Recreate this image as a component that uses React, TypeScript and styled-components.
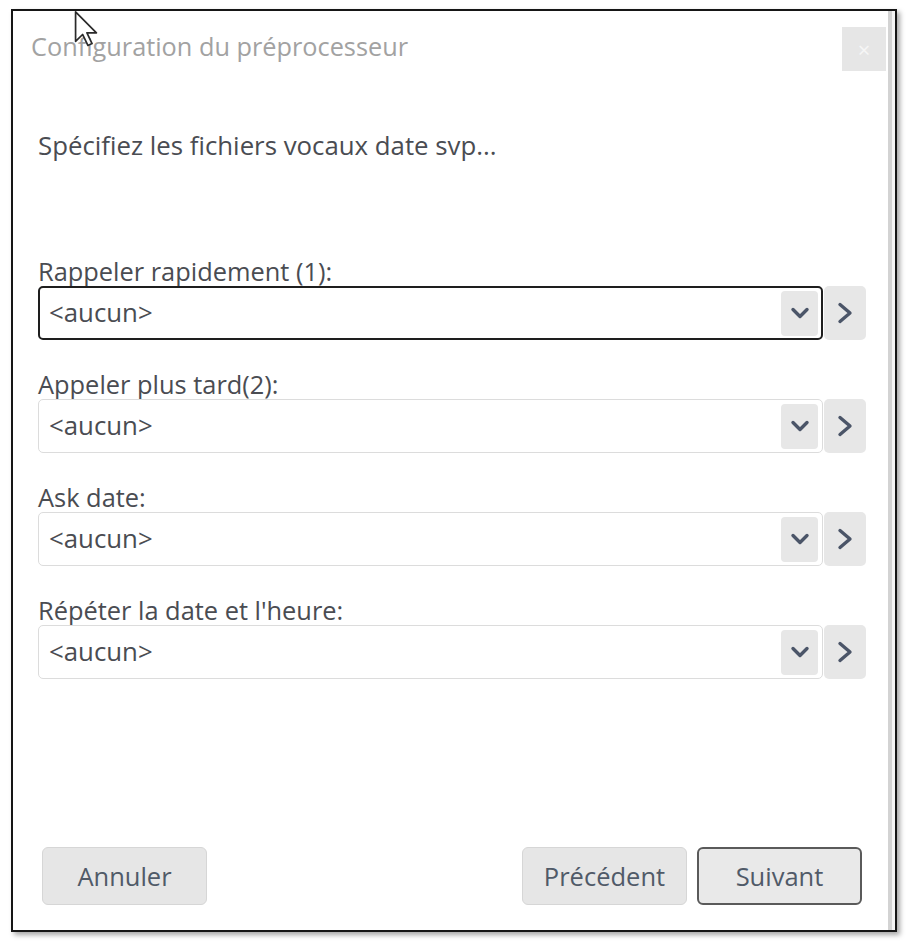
import React from "react";
import styled, { createGlobalStyle } from "styled-components";

const Global = createGlobalStyle`
  html, body { margin: 0; padding: 0; background: #ffffff; }
  body { font-family: "Open Sans", "Noto Sans", sans-serif; }
  * { box-sizing: border-box; }
`;

const Page = styled.div`
  width: 907px;
  height: 946px;
  padding: 9px 0 0 11px;
  position: relative;
`;

const Dialog = styled.div`
  width: 886px;
  height: 923px;
  border: 2px solid #161616;
  background: #ffffff;
  box-shadow: inset -3px 0 0 #f4f4f4, inset -7px 0 0 #d3d3d3, 3px 3px 5px rgba(0, 0, 0, 0.35);
  display: flex;
  flex-direction: column;
  font-family: "Open Sans", "Noto Sans", sans-serif;
`;

const Header = styled.div`
  display: flex;
  align-items: center;
  justify-content: space-between;
  padding: 16px 9px 0 18px;
`;

const Title = styled.div`
  font-size: 25.3px;
  color: #a2a2a2;
  line-height: 34px;
  margin-top: -6px;
`;

const CloseButton = styled.div`
  width: 44px;
  height: 44px;
  background: #e6e6e6;
  color: #f6f6f6;
  font-size: 22px;
  display: flex;
  align-items: center;
  justify-content: center;
`;

const Body = styled.div`
  padding: 57px 29px 0 25px;
  display: flex;
  flex-direction: column;
`;

const Intro = styled.div`
  font-size: 25.8px;
  color: #4a4c52;
  line-height: 34px;
  margin-bottom: 94px;
`;

const Field = styled.div`
  display: flex;
  flex-direction: column;
  margin-bottom: 29px;
`;

const Label = styled.div`
  font-size: 25.4px;
  line-height: 30px;
  color: #4a4c52;
`;

const Row = styled.div`
  display: flex;
  align-items: stretch;
  gap: 1px;
  height: 54px;
`;

const Select = styled.div<{ $focused?: boolean }>`
  flex: 1;
  display: flex;
  align-items: center;
  justify-content: space-between;
  border: ${(p) => (p.$focused ? "2px solid #1e1e1e" : "1px solid #dcdcdc")};
  border-radius: 5px;
  padding: ${(p) => (p.$focused ? "0 3px 0 9px" : "0 4px 0 10px")};
  background: #ffffff;
`;

const Value = styled.span`
  font-size: 25.8px;
  color: #4a4c52;
  margin-top: -2px;
`;

const DropButton = styled.div`
  width: 37px;
  height: 45px;
  border-radius: 4px;
  background: #e7e7e7;
  display: flex;
  align-items: center;
  justify-content: center;
`;

const NextButton = styled.div`
  width: 42px;
  border-radius: 5px;
  background: #e7e7e7;
  display: flex;
  align-items: center;
  justify-content: center;
`;

const Footer = styled.div`
  margin-top: auto;
  display: flex;
  align-items: center;
  padding: 0 33px 25px 29px;
`;

const Spacer = styled.div`
  flex: 1;
`;

const Button = styled.div<{ $primary?: boolean }>`
  width: 165px;
  height: 58px;
  border-radius: 6px;
  background: ${(p) => (p.$primary ? "#e9e9e9" : "#e6e6e6")};
  border: ${(p) => (p.$primary ? "2px solid #5a5a5a" : "1px solid #d6d6d6")};
  display: flex;
  align-items: center;
  justify-content: center;
  font-size: 25.5px;
  color: #505a68;
  & + & {
    margin-left: 10px;
  }
`;

const Cursor = styled.svg`
  position: absolute;
  left: 74px;
  top: 11px;
`;

const ChevronDown = () => (
  <svg width="20" height="14" viewBox="0 0 20 14">
    <polyline points="3,3.5 10,10.5 17,3.5" fill="none" stroke="#4b5568" strokeWidth="3.4" strokeLinecap="round" strokeLinejoin="round" />
  </svg>
);

const ChevronRight = () => (
  <svg width="16" height="24" viewBox="0 0 16 24">
    <polyline points="3,3.5 13,12 3,20.5" fill="none" stroke="#4b5568" strokeWidth="3.4" strokeLinecap="round" strokeLinejoin="round" />
  </svg>
);

const fields = [
  "Rappeler rapidement (1):",
  "Appeler plus tard(2):",
  "Ask date:",
  "Répéter la date et l'heure:",
];

export default function App() {
  return (
    <Page>
      <Global />
      <Dialog>
        <Header>
          <Title>Configuration du préprocesseur</Title>
          <CloseButton>×</CloseButton>
        </Header>
        <Body>
          <Intro>Spécifiez les fichiers vocaux date svp...</Intro>
          {fields.map((f, i) => (
            <Field key={f}>
              <Label>{f}</Label>
              <Row>
                <Select $focused={i === 0}>
                  <Value>&lt;aucun&gt;</Value>
                  <DropButton>
                    <ChevronDown />
                  </DropButton>
                </Select>
                <NextButton>
                  <ChevronRight />
                </NextButton>
              </Row>
            </Field>
          ))}
        </Body>
        <Footer>
          <Button>Annuler</Button>
          <Spacer />
          <Button>Précédent</Button>
          <Button $primary>Suivant</Button>
        </Footer>
      </Dialog>
      <Cursor width="24" height="36" viewBox="0 0 12 19">
        <path d="M0.5,0.5 L0.5,16 L4.2,12.4 L7,18.2 L9.2,17.2 L6.5,11.5 L11.5,11.5 Z" fill="#ffffff" stroke="#2a2a2a" strokeWidth="0.9" strokeLinejoin="round" />
      </Cursor>
    </Page>
  );
}
